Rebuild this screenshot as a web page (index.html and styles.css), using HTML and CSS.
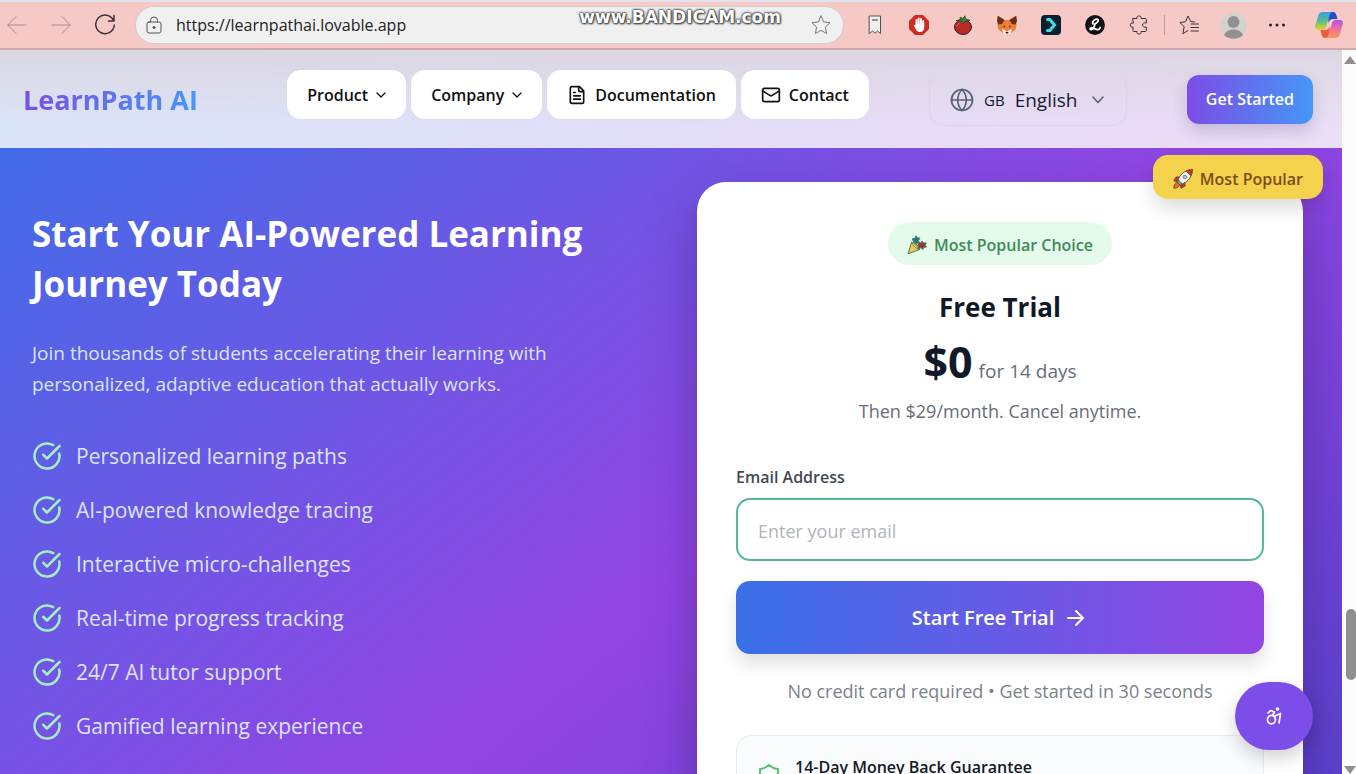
FILE: index.html
```
<!DOCTYPE html>
<html lang="en">
<head>
  <meta charset="UTF-8" />
  <meta name="viewport" content="width=device-width, initial-scale=1" />
  <title>LearnPath AI</title>
  <link rel="stylesheet" href="styles.css">
</head>
<body>

<div class="toolbar">
  <button class="tool" aria-label="Back"><svg class="dim" width="20" height="20" viewBox="0 0 20 20"><path d="M19 10H1M9 1.500L.8 10 9 18.500"/></svg></button>
  <button class="tool" aria-label="Forward"><svg class="dim" width="20" height="20" viewBox="0 0 20 20"><path d="M1 10h18M11 1.500l8.200 8.500L11 18.500"/></svg></button>
  <button class="tool" aria-label="Reload"><svg width="22" height="22" viewBox="0 0 22 22"><path d="M19.500 6.500A9.300 9.300 0 1 0 20.300 11M20 1.500v5.500h-5.500" stroke-width="1.500"/></svg></button>

  <div class="address">
    <svg width="16" height="18" viewBox="0 0 16 18"><rect x="1" y="6" width="14" height="11" rx="2"/><path d="M4.500 6V4.500a3.500 3.500 0 0 1 7 0V6"/><circle cx="8" cy="11.500" r="1" fill="#444"/></svg>
    <input class="url" type="text" value="https://learnpathai.lovable.app" aria-label="Address" />
    <button class="fav" aria-label="Add to favorites"><svg width="20" height="20" viewBox="0 0 20 20"><path d="M10 1l2.700 5.900 6.400.8-4.700 4.400 1.200 6.400L10 15.400l-5.600 3.100 1.200-6.400L.9 7.700l6.400-.8z"/></svg></button>
    <span class="watermark">www.<b>BANDICAM</b>.com</span>
  </div>

  <button class="tool" aria-label="Bookmark"><svg width="14" height="20" viewBox="0 0 14 20"><path d="M1.500 1h11v17.500L9.500 16 7 18.200 4.500 16l-3 2.500z" fill="#efefef" stroke="#555"/><path d="M4.500 5h5"/></svg></button>
  <button class="tool" aria-label="Ad blocker"><svg width="20" height="20" viewBox="0 0 20 20"><path d="M6 0h8l6 6v8l-6 6H6l-6-6V6z" fill="#cf2a24" stroke="none"/><path d="M7.500 10V5M9.700 9V3.500M12 9V4M14.200 10.500V6" stroke="#fff" stroke-width="1.900"/><path d="M6.500 8.500h8.700v4c0 2.500-1.500 4.500-4.200 4.500-2.500 0-3.700-1.500-4.500-3.200L4.700 10.500c.6-.8 1.300-.5 1.800.3z" fill="#fff" stroke="none"/></svg></button>
  <button class="tool" aria-label="Pomodoro"><svg width="20" height="20" viewBox="0 0 20 20"><ellipse cx="10" cy="12" rx="8.500" ry="7.500" fill="#b8292a" stroke="#3c1d18"/><path d="M3.500 5.500l4-1L7 2l3 1.500L12 .8l.5 3 4.500 1.500-4 .8L10 8.500 8 6z" fill="#2e8034" stroke="#24451f" stroke-width=".7"/><path d="M4 11c.3-1.500 1-2 2-2.500" stroke="#e27b72"/></svg></button>
  <button class="tool" aria-label="Wallet"><svg width="20" height="20" viewBox="0 0 20 20" stroke-width="0"><path d="M.8.8L8 5h4L19.200.8l.3 9.200-1 4.500-5 4H6.500l-5-4-1-4.500z" fill="#ec7e37"/><path d="M.8.8L7.500 5 5 9 1.500 9.500 0 6zM19.200.8L12.500 5 15 9l3.500.5L20 6z" fill="#6e2c18"/><path d="M5 14l3 1 2 2 2-2 3-1-1.500 5h-7z" fill="#fff4e9"/><path d="M8.500 17h3l-.5 1.500H9zM5.500 10.500l2.500 1-.2 1.200zM14.500 10.500l-2.500 1 .2 1.200z" fill="#26201f"/></svg></button>
  <button class="tool" aria-label="Side panel"><svg width="20" height="20" viewBox="0 0 20 20"><rect width="20" height="20" rx="4" fill="#0b222c" stroke="none"/><path d="M6.500 4.500h2.300L13.500 10l-4.700 5.500H6.500" stroke="#45dbea" stroke-width="3" stroke-linejoin="miter"/></svg></button>
  <button class="tool" aria-label="Lingo"><svg width="20" height="20" viewBox="0 0 20 20"><circle cx="10" cy="10" r="9.900" fill="#111" stroke="none"/><path d="M8 8.800C6.500 7 10 3.500 12.500 4.300c2 1.200-.8 4-2.500 4.500-.7 3-2 5.800-4 5.900-2-.4-.5-2.900 2.500-1.700 2.500 1.700 5.500 3 6.700-.5" stroke="#fff" stroke-width="1.800"/></svg></button>
  <button class="tool" aria-label="Extensions"><svg width="20" height="20" viewBox="0 0 20 20"><path d="M4 3.500h4C7.500 1.800 8.600.9 10 .9s2.500.9 2 2.600h4.500c.5 0 .8.300.8.800V8c-2-.7-3.800.5-3.800 2s1.800 2.700 3.800 2v3.700c0 .5-.3.800-.8.800H12c.5 1.700-.6 2.600-2 2.600s-2.500-.9-2-2.600H4.800c-.5 0-.8-.3-.8-.8V12c-1.700.5-2.800-.5-2.800-2S2.300 7.500 4 8z"/></svg></button>
  <span class="divider"></span>
  <button class="tool" aria-label="Favorites"><svg width="20" height="20" viewBox="0 0 20 20"><path d="M15.500 7l-3.700-.5L9 1 6.500 6.800.8 7.500l4.400 4.200-1.400 7 5.200-3.200M12 9h7.500M12 12.500h7.500M12 16h7.500"/></svg></button>
  <button class="tool" aria-label="Profile"><svg width="27" height="27" viewBox="0 0 27 27" stroke-width="0"><circle cx="13.500" cy="13.500" r="13.400" fill="#d5d2ce"/><circle cx="13.500" cy="10" r="6" fill="#92908e"/><path d="M4 23c2-4 5.500-5.500 9.500-5.500S21 19 23 23c-5 5-14 5-19 0z" fill="#92908e"/></svg></button>
  <button class="tool" aria-label="More"><svg width="18" height="6" viewBox="0 0 18 6" stroke-width="0"><g fill="#222"><circle cx="2.500" cy="3" r="1.500"/><circle cx="9" cy="3" r="1.500"/><circle cx="15.500" cy="3" r="1.500"/></g></svg></button>
  <button class="tool copilot" aria-label="Copilot">
    <svg width="28" height="26" viewBox="0 0 28 26" stroke-width="0">
      <defs>
        <linearGradient id="cpA" x1="0" y1="0" x2="0" y2="1"><stop offset="0" stop-color="#3b9be8"/><stop offset=".5" stop-color="#56bd8b"/><stop offset="1" stop-color="#f0d22f"/></linearGradient>
        <linearGradient id="cpB" x1="0" y1="0" x2="0" y2="1"><stop offset="0" stop-color="#a955e4"/><stop offset=".5" stop-color="#ee6f9c"/><stop offset="1" stop-color="#f79a51"/></linearGradient>
      </defs>
      <path d="M13 0h5c2 0 3 1.500 3.500 3.500L22.500 7h-5c-2 0-3 1-4 4z" fill="#1c4fd0"/>
      <path d="M15 26h-5c-2 0-3-1.500-3.500-3.500L5.500 18h5c2 0 3-1 4-4z" fill="#ea5c3d"/>
      <path d="M8 0h9.500c-2 .5-2.700 2-3.500 5l-3 10c-.7 2-1.800 3-4 3H3c-2.500 0-3.400-2-2.700-4.500l3-10C4 1 5.500 0 8 0z" fill="url(#cpA)"/>
      <path d="M20 26h-9.500c2-.5 2.700-2 3.500-5l3-10c.7-2 1.800-3 4-3h4c2.500 0 3.400 2 2.700 4.500l-3 10C24 25 22.500 26 20 26z" fill="url(#cpB)"/>
    </svg>
  </button>
</div>

<div class="window">
  <div class="page">
    <header class="header">
      <a class="logo" href="#">LearnPath AI</a>
      <nav class="nav">
        <button class="nav-item">Product <svg width="10" height="10" viewBox="0 0 10 10"><path d="M1 3l4 4 4-4" stroke-width="1.300"/></svg></button>
        <button class="nav-item">Company <svg width="10" height="10" viewBox="0 0 10 10"><path d="M1 3l4 4 4-4" stroke-width="1.300"/></svg></button>
        <a class="nav-item" href="#"><svg width="20" height="20" viewBox="0 0 24 24" stroke-width="2"><path d="M15 2H6a2 2 0 0 0-2 2v16a2 2 0 0 0 2 2h12a2 2 0 0 0 2-2V7zM14 2v4a2 2 0 0 0 2 2h4M10 9H8M16 13H8M16 17H8"/></svg> Documentation</a>
        <a class="nav-item" href="#"><svg width="20" height="20" viewBox="0 0 24 24" stroke-width="2"><rect x="2" y="4" width="20" height="16" rx="2"/><path d="M22 7l-9 5.700a2 2 0 0 1-2 0L2 7"/></svg> Contact</a>
      </nav>
      <label class="language">
        <svg width="24" height="24" viewBox="0 0 24 24" stroke-width="1.700"><circle cx="12" cy="12" r="10.500"/><path d="M12 1.500a15 15 0 0 0 0 21 15 15 0 0 0 0-21M1.500 12h21"/></svg>
        <span class="code">GB</span>
        <select aria-label="Language"><option>English</option></select>
        <svg width="12" height="12" viewBox="0 0 12 12"><path d="M1 3l5 5.500L11 3" stroke-width="1.500"/></svg>
      </label>
      <button class="get-started">Get Started</button>
    </header>

    <main class="cta">
      <section class="pitch">
        <h1>Start Your AI-Powered Learning Journey Today</h1>
        <p>Join thousands of students accelerating their learning with personalized, adaptive education that actually works.</p>
        <ul class="features">
          <li><svg width="30" height="30" viewBox="0 0 24 24"><path d="M21.800 10A10 10 0 1 1 17 3.340M9 11l3 3L22 4"/></svg>Personalized learning paths</li>
          <li><svg width="30" height="30" viewBox="0 0 24 24"><path d="M21.800 10A10 10 0 1 1 17 3.340M9 11l3 3L22 4"/></svg>AI-powered knowledge tracing</li>
          <li><svg width="30" height="30" viewBox="0 0 24 24"><path d="M21.800 10A10 10 0 1 1 17 3.340M9 11l3 3L22 4"/></svg>Interactive micro-challenges</li>
          <li><svg width="30" height="30" viewBox="0 0 24 24"><path d="M21.800 10A10 10 0 1 1 17 3.340M9 11l3 3L22 4"/></svg>Real-time progress tracking</li>
          <li><svg width="30" height="30" viewBox="0 0 24 24"><path d="M21.800 10A10 10 0 1 1 17 3.340M9 11l3 3L22 4"/></svg>24/7 AI tutor support</li>
          <li><svg width="30" height="30" viewBox="0 0 24 24"><path d="M21.800 10A10 10 0 1 1 17 3.340M9 11l3 3L22 4"/></svg>Gamified learning experience</li>
        </ul>
      </section>

      <section class="card">
        <div class="ribbon">
          <svg width="20" height="20" viewBox="0 0 20 20" stroke="#1c1c1c" stroke-width="1"><path d="M6.500 8H3L.8 12l4 .5z" fill="#cf2f3b"/><path d="M12 13.500V17l-4 2.300-.5-4z" fill="#cf2f3b"/><path d="M3.500 13.500C1.500 14.500.8 17 .8 19.200c2.200 0 4.700-.7 5.700-2.700z" fill="#e86b32"/><path d="M19.200.8C14 .8 9.500 3 6.500 8l-2.700 4.800 3.400 3.400L12 13.500c5-3 7.200-7.500 7.200-12.700z" fill="#f4f7f9"/><path d="M4.800 11l-1 1.800 3.400 3.400 1.800-1c-1-2-2.200-3.200-4.200-4.200z" fill="#4aaee0"/><path d="M19.200.8c-2.500 0-4.500.5-6 1.200l4.800 4.800c.8-1.700 1.200-3.700 1.200-6z" fill="#d6303d"/><circle cx="12" cy="8" r="1.800" fill="#9fcfe4" stroke="#888"/></svg>
          Most Popular
        </div>
        <div class="chip">
          <svg width="20" height="20" viewBox="0 0 20 20" stroke="#1c1c1c" stroke-width="1"><path d="M4.500 7.500L1 18.800l11.500-4.300c-3.500-1-6-3.500-8-7z" fill="#f6c250"/><path d="M4.800 7.500c1.700-1.500 8.700 4.500 7.700 7" fill="#d9952e"/><path d="M6.500 6.500L5.200 3.800l2.600-.5L9 .8l1.500 2 2.500.4-1.500 2.300.8 2.200-3 .8z" fill="#2f6f9c"/><path d="M11 10.500l.5-3 2.500.5 1-2 1.500 2 2.700-.2-1 2.400 1.300 1.800-2.800.3-.7 2.200-2-1.700-2.300.7z" fill="#a92f34"/></svg>
          Most Popular Choice
        </div>
        <h2>Free Trial</h2>
        <div class="price"><strong>$0</strong> for 14 days</div>
        <p class="then">Then $29/month. Cancel anytime.</p>
        <form class="signup">
          <label for="email">Email Address</label>
          <input type="email" id="email" placeholder="Enter your email" />
          <button type="submit">Start Free Trial <svg width="24" height="24" viewBox="0 0 24 24" stroke-width="2"><path d="M4 12h15M12 5l7 7-7 7"/></svg></button>
        </form>
        <p class="note">No credit card required • Get started in 30 seconds</p>
        <div class="guarantee">
          <svg width="24" height="28" viewBox="0 0 24 28" stroke-width="2"><path d="M21 14c0 6-4 9-9 11-5-2-9-5-9-11V7c3 0 6-1.500 9-4 3 2.500 6 4 9 4z"/></svg>
          <h3>14-Day Money Back Guarantee</h3>
        </div>
      </section>
    </main>
  </div>
  <div class="scrollbar">
    <svg width="12" height="8" viewBox="0 0 12 8"><path d="M6 0l6 8H0z"/></svg>
    <span class="thumb"></span>
    <svg width="12" height="8" viewBox="0 0 12 8"><path d="M0 0h12L6 8z"/></svg>
  </div>
</div>

<button class="a11y" aria-label="Accessibility options">
  <svg width="16" height="18" viewBox="0 0 16 18"><circle cx="11.500" cy="2" r="1.800" fill="#fff" stroke="none"/><path d="M2 6l2.500-2.500L8.500 5 6.500 8.500M6.500 8.500c-2.500-.6-5 1-5 4s2 4.300 4 4.300 4-1.500 4-4c0-1.800-1-3.500-3-4.300zM9 9l5.500-2.500-1.500 9.500"/></svg>
</button>

</body>
</html>
```
FILE: styles.css
```
* {
  box-sizing: border-box;
}
body {
  margin: 0;
  height: 100vh;
  display: flex;
  flex-direction: column;
  overflow: hidden;
  font-family: "Open Sans", "Noto Sans", sans-serif;
  color: #111827;
}
h1, h2, h3, p, ul {
  margin: 0;
  padding: 0;
}
button, input, select {
  font-family: inherit;
  border: none;
  background: none;
  padding: 0;
}
button {
  cursor: pointer;
}
a {
  text-decoration: none;
}
svg {
  flex: none;
  fill: none;
  stroke: currentColor;
  stroke-linecap: round;
  stroke-linejoin: round;
}

/* browser bar */
.toolbar {
  flex: none;
  height: 50px;
  display: flex;
  align-items: center;
  gap: 10px;
  padding-right: 10px;
  background: #f6c9c7;
  border-top: 2px solid #dfe3ec;
  border-bottom: 2px solid #cfa9aa;
}
.tool {
  width: 34px;
  height: 34px;
  display: flex;
  align-items: center;
  justify-content: center;
  color: #3a3232;
}
.tool .dim {
  color: #a98b8b;
}
.address {
  position: relative;
  flex: 1;
  height: 38px;
  display: flex;
  align-items: center;
  gap: 14px;
  margin: 0 4px 0 3px;
  padding: 0 12px 0 10px;
  background: #f0f0f0;
  border: 1px solid #d3cccc;
  border-radius: 19px;
  color: #555;
}
.url {
  flex: 1;
  font-size: 16px;
  color: #222;
}
.fav {
  display: flex;
  color: #777;
}
.watermark {
  position: absolute;
  top: 0;
  right: 62px;
  font: 17px/20px "DejaVu Sans", sans-serif;
  font-weight: bold;
  color: #fff;
  text-shadow: 0 0 2px #333, 0 0 2px #333, 1px 1px 2px #555, 0 0 3px #555;
}
.divider {
  width: 1px;
  height: 20px;
  margin: 0 -3px 0 -2px;
  background: #b99a9a;
}
.copilot {
  margin-left: 8px;
}

.window {
  flex: 1;
  min-height: 0;
  display: flex;
}
.page {
  flex: 1;
  overflow: hidden;
}
.scrollbar {
  width: 14px;
  display: flex;
  flex-direction: column;
  align-items: flex-end;
  padding: 6px 0 0;
  background: #fbfbfb;
}
.scrollbar svg {
  fill: #8f8f8f;
  stroke: none;
}
.thumb {
  width: 10px;
  height: 71px;
  margin: auto 0 86px;
  background: #8f8f8f;
  border-radius: 5px;
}

/* site header */
.header {
  position: relative;
  height: 98px;
  display: flex;
  align-items: center;
  justify-content: space-between;
  padding: 0 29px 0 23px;
  background:
    linear-gradient(rgba(219, 214, 224, 0.95), rgba(219, 214, 224, 0) 80%),
    linear-gradient(90deg, #dae5f9, #e0dffa 38%, #eadbf7 85%, #ebdff6);
}
.logo {
  min-width: 204px;
  font-size: 27px;
  font-weight: 700;
  color: transparent;
  background: linear-gradient(90deg, #7c4de6, #4597f7 174px);
  -webkit-background-clip: text;
  background-clip: text;
}
.nav {
  display: flex;
  gap: 5px;
  margin-bottom: 10px;
}
.nav-item {
  height: 49px;
  display: flex;
  align-items: center;
  gap: 8px;
  padding: 2px 20px 0;
  background: #fff;
  border-radius: 14px;
  font-size: 16px;
  font-weight: 600;
  color: #111;
}
.language {
  height: 54px;
  display: flex;
  align-items: center;
  gap: 10px;
  padding: 2px 22px 0 20px;
  border: 1px solid rgba(208, 205, 225, 0.5);
  border-top-color: transparent;
  border-radius: 15px;
  color: #596074;
}
.code {
  font-size: 15px;
  color: #111827;
}
.language select {
  appearance: none;
  padding-right: 4px;
  font-size: 19px;
  font-weight: 500;
  color: #171a33;
}
.get-started {
  height: 49px;
  padding: 0 19px;
  background: linear-gradient(90deg, #7c4de6, #4597f7);
  border-radius: 12px;
  box-shadow: 0 8px 16px rgba(60, 50, 110, 0.2);
  font-size: 16px;
  font-weight: 600;
  color: #fff;
}

/* call to action, its gradient starts under the header */
.cta {
  min-height: 1070px;
  display: grid;
  grid-template-columns: 1fr 1fr;
  gap: 59px;
  margin-top: -98px;
  padding: 132px 39px 34px 32px;
  background: linear-gradient(to bottom right, #3a6fe8, #9345e3 50%, #3f40c0);
}
.pitch {
  padding-top: 27px;
  color: #fff;
}
.pitch h1 {
  font-size: 35px;
  line-height: 50px;
  font-weight: 700;
}
.pitch p {
  max-width: 560px;
  margin: 29px 0 39px;
  font-size: 19px;
  line-height: 31px;
  color: #dbe4fb;
}
.features {
  display: flex;
  flex-direction: column;
  gap: 20px;
  list-style: none;
}
.features li {
  display: flex;
  align-items: center;
  gap: 14px;
  font-size: 21px;
  line-height: 34px;
  color: #dbe4fb;
}
.features svg {
  color: #a5eec4;
  stroke-width: 2;
}
.card {
  position: relative;
  display: flex;
  flex-direction: column;
  align-items: center;
  padding: 40px 39px;
  background: #fff;
  border-radius: 29px;
  box-shadow: 0 20px 50px rgba(30, 20, 80, 0.35);
}
.ribbon {
  position: absolute;
  top: -27px;
  right: -20px;
  height: 44px;
  display: flex;
  align-items: center;
  gap: 7px;
  padding: 3px 20px 0;
  background: #f4d24c;
  border-radius: 15px;
  box-shadow: 0 10px 18px rgba(0, 0, 0, 0.13);
  font-size: 16px;
  font-weight: 600;
  color: #7b4e1a;
}
.chip {
  height: 43px;
  display: flex;
  align-items: center;
  gap: 7px;
  padding: 2px 19px 0;
  background: #e4faeb;
  border-radius: 22px;
  font-size: 16px;
  font-weight: 600;
  color: #3f8b57;
}
.card h2 {
  margin-top: 24px;
  font-size: 26px;
  line-height: 36px;
}
.price {
  display: flex;
  align-items: baseline;
  gap: 6px;
  margin-top: 12px;
  font-size: 19px;
  line-height: 24px;
  color: #666d79;
}
.price strong {
  font-size: 43px;
  line-height: 50px;
  color: #111827;
}
.then {
  margin-top: 9px;
  font-size: 18px;
  line-height: 30px;
  color: #666d79;
}
.signup {
  width: 100%;
  display: flex;
  flex-direction: column;
  margin-top: 39px;
}
.signup label {
  font-size: 16px;
  line-height: 24px;
  font-weight: 600;
  color: #414856;
}
.signup input {
  height: 63px;
  margin: 9px 0 20px;
  padding: 2px 20px 0;
  border: 2px solid #54b893;
  border-radius: 14px;
  font-size: 18px;
}
.signup input::placeholder {
  color: #b0b3ba;
}
.signup button {
  height: 73px;
  display: flex;
  align-items: center;
  justify-content: center;
  gap: 10px;
  background: linear-gradient(90deg, #3970e8, #9345e3);
  border-radius: 14px;
  box-shadow: 0 10px 18px rgba(0, 0, 0, 0.12);
  font-size: 20px;
  font-weight: 600;
  color: #fff;
}
.note {
  margin-top: 22px;
  font-size: 18px;
  line-height: 30px;
  color: #7b818c;
}
.guarantee {
  width: 100%;
  display: flex;
  align-items: flex-start;
  gap: 14px;
  margin-top: 29px;
  padding: 18px 20px 40px;
  background: #fafbfd;
  border: 1px solid #e9ebef;
  border-radius: 15px;
}
.guarantee svg {
  margin-top: 8px;
  color: #55bf73;
}
.guarantee h3 {
  font-size: 16px;
  line-height: 26px;
  font-weight: 600;
}
.a11y {
  position: fixed;
  right: 43px;
  bottom: 24px;
  width: 78px;
  height: 68px;
  display: flex;
  align-items: center;
  justify-content: center;
  background: #7c4de8;
  border-radius: 34px;
  box-shadow: 0 8px 18px rgba(0, 0, 0, 0.18);
  color: #fff;
}
.a11y svg {
  stroke-width: 1.700;
}
```
